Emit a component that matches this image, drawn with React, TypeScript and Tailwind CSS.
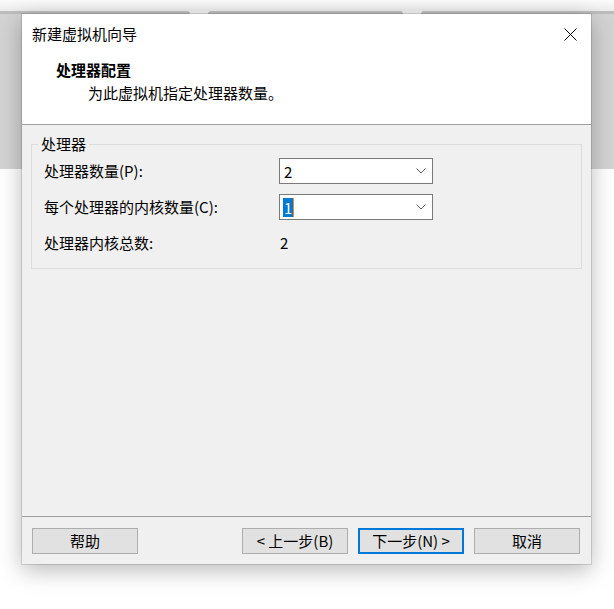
import React from 'react';

const Chevron: React.FC = () => (
  <svg width="10" height="6" viewBox="0 0 10 6" className="shrink-0">
    <polyline points="0.5,0.5 5,5 9.5,0.5" fill="none" stroke="#606060" strokeWidth="1" />
  </svg>
);

const Combo: React.FC<{ value: string; selected?: boolean }> = ({ value, selected }) => (
  <div className="h-[26px] w-[154px] border border-[#7a7a7a] bg-white flex items-center justify-between pl-[3px] pr-[6px]">
    <span
      className={
        selected
          ? 'px-[1px] h-[19px] leading-[19px] bg-[#0078d7] text-white border-r border-[#ff8c00]'
          : 'px-[1px] h-[19px] leading-[19px] text-black'
      }
    >
      {value}
    </span>
    <Chevron />
  </div>
);

const Button: React.FC<{ label: string; primary?: boolean }> = ({ label, primary }) => (
  <button
    className={
      primary
        ? 'w-[106px] h-[26px] bg-[#e1e1e1] border-2 border-[#0078d7] text-[15px] leading-[20px] text-black'
        : 'w-[106px] h-[26px] bg-[#e1e1e1] border border-[#adadad] text-[15px] leading-[20px] text-black'
    }
  >
    {label}
  </button>
);

const App: React.FC = () => {
  return (
    <div className="relative w-[614px] h-[609px] overflow-hidden bg-white font-['Noto_Sans_CJK_SC',sans-serif] text-[15px] leading-[20px] text-black">
      {/* desktop behind the dialog */}
      <div className="flex flex-col">
        <div className="h-[11px] bg-gradient-to-b from-[#fbfbfb] to-[#ececec]"></div>
        <div className="h-[3px] flex bg-[#f2f2f2]">
          <div className="w-[190px] bg-[#bdbdbd] rounded-tr-[3px]"></div>
          <div className="w-[18px]"></div>
          <div className="w-[195px] bg-[#bdbdbd] rounded-t-[3px]"></div>
          <div className="w-[18px]"></div>
          <div className="flex-1 bg-[#bdbdbd] rounded-tl-[3px]"></div>
        </div>
        <div className="h-[155px] bg-[#d3d3d3]"></div>
      </div>

      {/* dialog */}
      <div className="absolute left-[22px] top-[14px] w-[569px] h-[550px] flex flex-col bg-[#f0f0f0] shadow-[0_0_0_1px_rgba(0,0,0,0.12),0_6px_22px_rgba(0,0,0,0.28)]">
        {/* title bar */}
        <div className="h-[40px] bg-white flex items-center justify-between">
          <span className="pl-[10px]">新建虚拟机向导</span>
          <div className="w-[42px] h-[40px] flex items-center justify-center">
            <svg width="13" height="13" viewBox="0 0 13 13">
              <path d="M0.5 0.5 L12.5 12.5 M12.5 0.5 L0.5 12.5" stroke="#000" strokeWidth="1" fill="none" />
            </svg>
          </div>
        </div>

        {/* header */}
        <div className="h-[71px] bg-white border-b border-[#a0a0a0] pt-[6px]">
          <div className="pl-[34px] font-bold">处理器配置</div>
          <div className="pl-[66px] mt-[3px]">为此虚拟机指定处理器数量。</div>
        </div>

        {/* body */}
        <div className="flex-1 px-[9px] pt-[9px]">
          <fieldset className="border border-[#dcdcdc] px-0 pb-[12px]">
            <legend className="ml-[6px] px-[3px] leading-[20px]">处理器</legend>
            <div className="pt-[4px] pl-[12px] grid grid-cols-[235px_154px] gap-y-[10px] items-center">
              <span>处理器数量(P):</span>
              <Combo value="2" />
              <span>每个处理器的内核数量(C):</span>
              <Combo value="1" selected />
              <span className="h-[26px] flex items-center">处理器内核总数:</span>
              <span className="pl-[1px]">2</span>
            </div>
          </fieldset>
        </div>

        {/* footer */}
        <div className="border-t border-[#a0a0a0] pt-[11px] pb-[10px] pl-[10px] pr-[11px] flex items-center">
          <Button label="帮助" />
          <div className="flex-1"></div>
          <div className="flex gap-[10px]">
            <Button label="< 上一步(B)" />
            <Button label="下一步(N) >" primary />
            <Button label="取消" />
          </div>
        </div>
      </div>
    </div>
  );
};

export default App;
